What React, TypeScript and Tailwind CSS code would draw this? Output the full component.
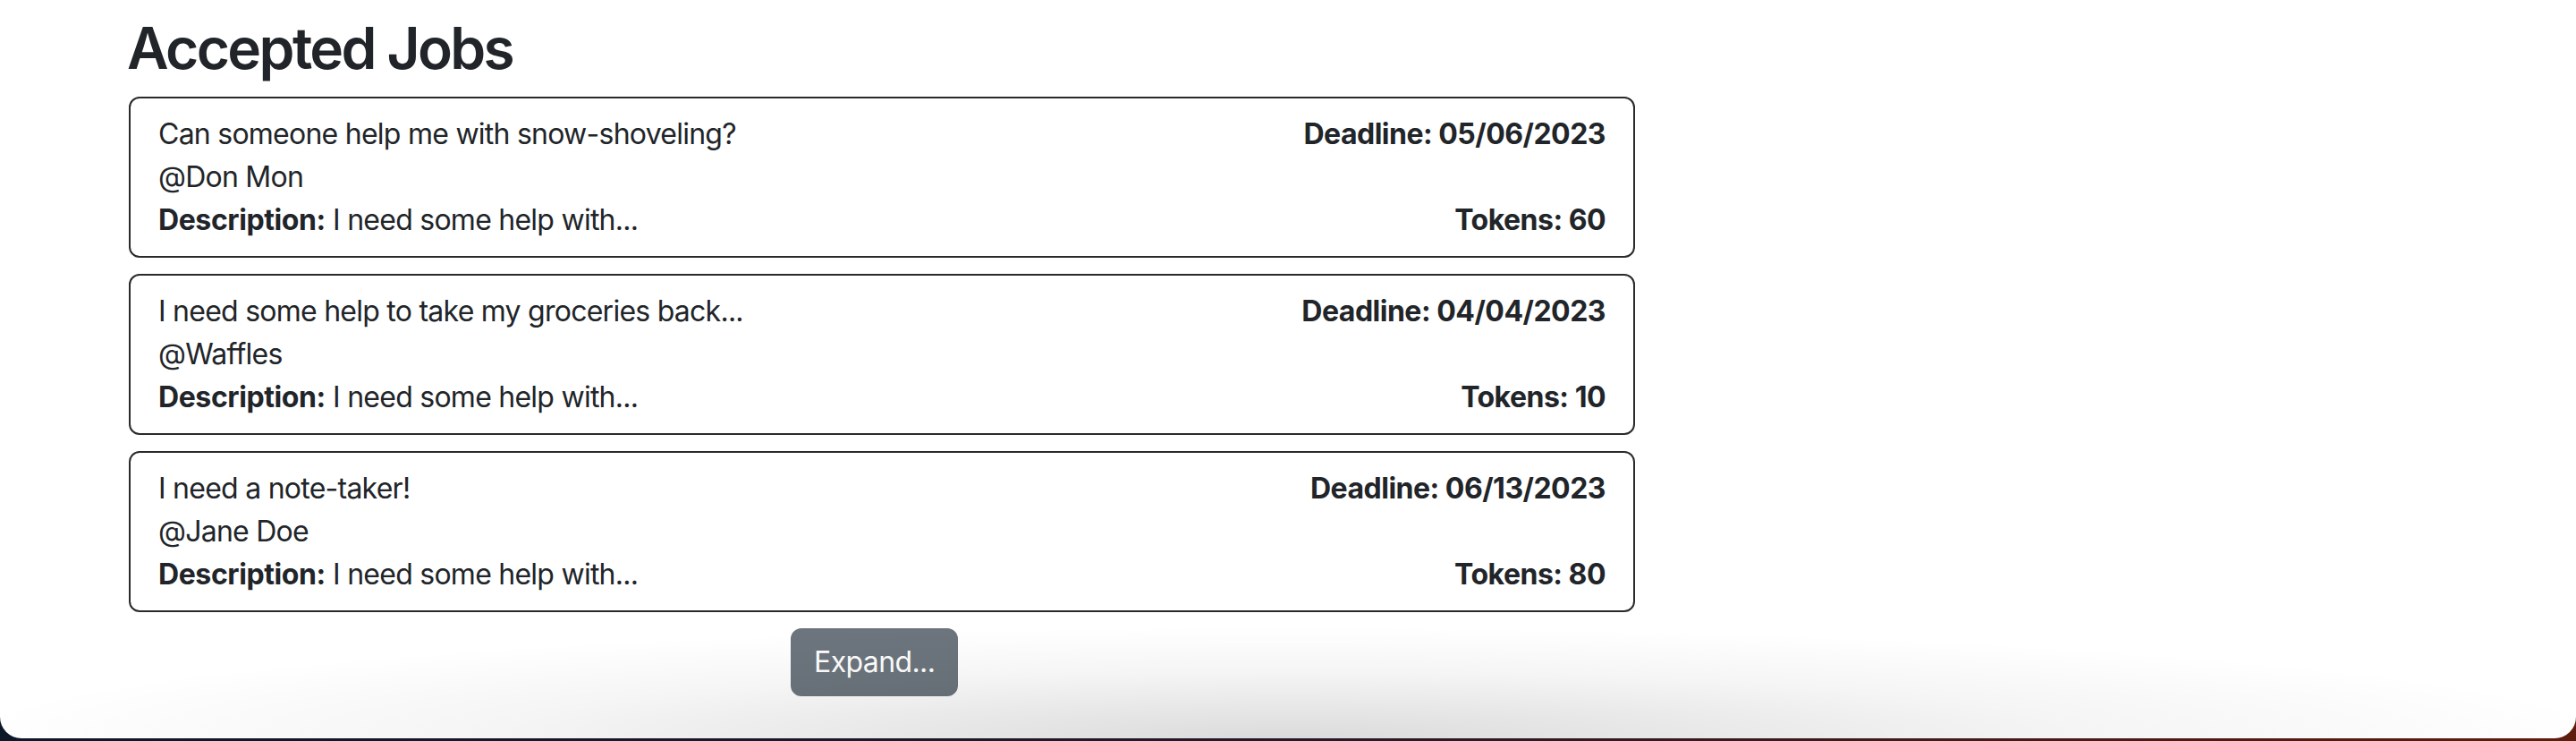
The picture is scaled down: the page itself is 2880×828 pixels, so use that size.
import React from "react";

const jobs = [
  { title: "Can someone help me with snow-shoveling?", user: "@Don Mon", deadline: "05/06/2023", tokens: 60 },
  { title: "I need some help to take my groceries back...", user: "@Waffles", deadline: "04/04/2023", tokens: 10 },
  { title: "I need a note-taker!", user: "@Jane Doe", deadline: "06/13/2023", tokens: 80 },
];

export default function App() {
  return (
    <div
      className="w-[2880px] h-[828px] bg-[linear-gradient(to_right,#0c1728,#241a2a_50%,#5e1c0c)] overflow-hidden"
      style={{ fontFamily: "Inter, 'Noto Sans', 'Liberation Sans', sans-serif" }}
    >
      <div className="relative h-[825px] bg-white rounded-b-[24px] overflow-hidden text-[#212529]">
        <div className="pl-[144px] pt-[15px] w-[1828px]">
          <h2 className="text-[64px] leading-[77px] font-semibold mb-[16px] -ml-[2px] tracking-[-2.6px]">Accepted Jobs</h2>
          <div className="flex flex-col gap-[18px]">
            {jobs.map((j) => (
              <div
                key={j.title}
                className="border-2 border-[#2a2a2a] rounded-[12px] pl-[31px] pr-[31px] py-[16px] text-[32px] leading-[48px] tracking-[-0.75px] flex justify-between"
              >
                <div className="flex flex-col">
                  <div>{j.title}</div>
                  <div>{j.user}</div>
                  <div>
                    <span className="font-bold tracking-[-0.4px]">Description:</span> I need some help with...
                  </div>
                </div>
                <div className="flex flex-col items-end justify-between font-bold tracking-[-0.5px]">
                  <div>Deadline: {j.deadline}</div>
                  <div>Tokens: {j.tokens}</div>
                </div>
              </div>
            ))}
          </div>
          <div className="mt-[18px] ml-[740px]">
            <button className="bg-[#6c757d] text-white text-[32px] leading-[48px] tracking-[-0.6px] px-[24px] py-[12px] border-2 border-[#6c757d] rounded-[12px]">
              Expand...
            </button>
          </div>
        </div>
        <div className="pointer-events-none absolute left-0 right-0 bottom-0 h-[130px] bg-[radial-gradient(ellipse_1500px_125px_at_50%_100%,rgba(0,0,0,0.14),rgba(0,0,0,0.04)_60%,transparent)]" />
      </div>
    </div>
  );
}
